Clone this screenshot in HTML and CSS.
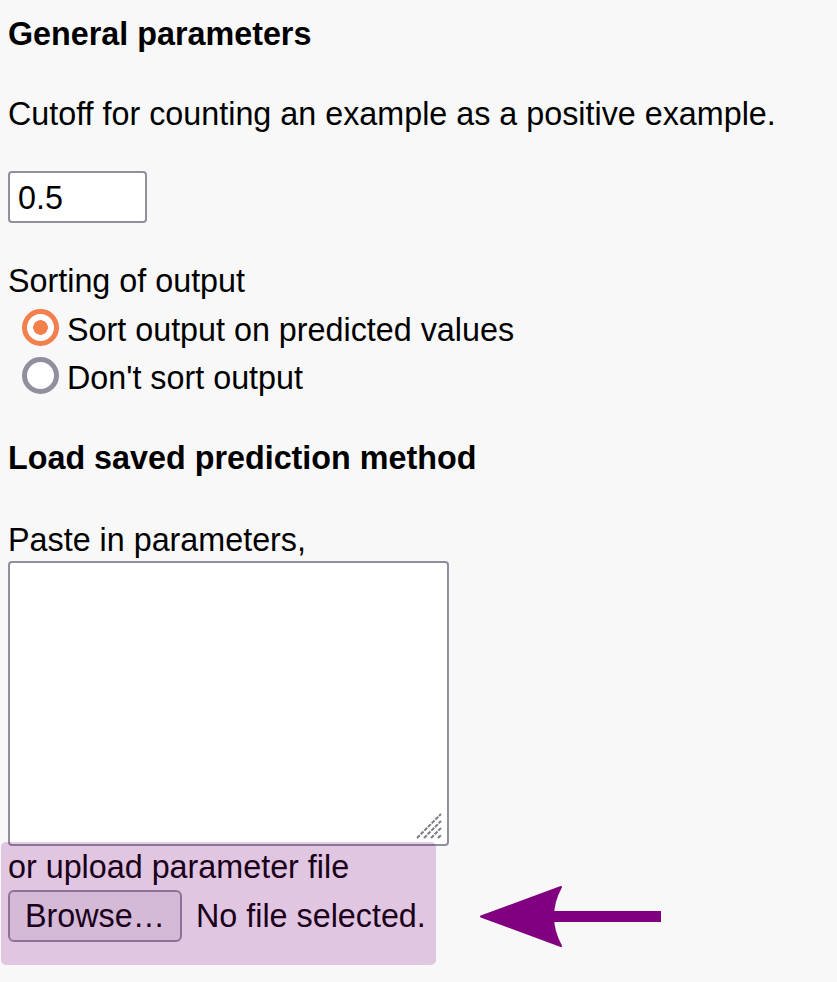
FILE: index.html
```html
<!DOCTYPE html>
<html lang="en">
<head>
<meta charset="utf-8">
<title>Parameters</title>
<link rel="stylesheet" href="styles.css">
</head>
<body>
<main class="form">
  <h2 class="section-title first">General parameters</h2>
  <p class="cutoff-label">Cutoff for counting an example as a positive example.</p>
  <input class="cutoff" type="text" value="0.5">
  <p class="group-label">Sorting of output</p>
  <label class="radio-row first-radio"><input class="radio" type="radio" name="sort" checked><span>Sort output on predicted values</span></label>
  <label class="radio-row"><input class="radio" type="radio" name="sort"><span>Don't sort output</span></label>
  <h2 class="section-title second">Load saved prediction method</h2>
  <p class="paste-label">Paste in parameters,</p>
  <div class="ta-wrap">
    <textarea class="params"></textarea>
    <svg class="grip" width="28" height="28" viewBox="0 0 28 28" aria-hidden="true">
      <path d="M2 26 L26 2 M9 26 L26 9 M16 26 L26 16 M23 26 L26 23" stroke="#7c7c87" stroke-width="2" stroke-dasharray="4 1.2" fill="none"/>
    </svg>
  </div>
  <div class="upload">
    <p class="upload-label">or upload parameter file</p>
    <div class="file-row">
      <button class="browse" type="button">Browse…</button>
      <span class="file-status">No file selected.</span>
    </div>
    <div class="highlight"></div>
  </div>
</main>
<svg class="arrow" width="186" height="66" viewBox="0 0 186 66" aria-hidden="true">
  <rect x="74" y="27" width="109" height="11" fill="#800080"/>
  <path d="M3 32.5 L83 3 Q67 32.5 83 62 Z" fill="#800080" stroke="#800080" stroke-width="2" stroke-linejoin="round"/>
</svg>
</body>
</html>
```

FILE: styles.css
```css
html, body {
  margin: 0;
  padding: 0;
  background: #f8f8f8;
}

body {
  position: relative;
  font-family: "Liberation Sans", Arial, sans-serif;
  font-size: 32.3px;
  line-height: 37px;
  color: #000;
  min-height: 982px;
}

.form {
  padding: 0 8px;
}

.section-title {
  font-size: 32.3px;
  font-weight: bold;
  margin: 0;
  line-height: 37px;
}

.section-title.first {
  margin-top: 16px;
}

.section-title.second {
  margin-top: 38px;
}

p {
  margin: 0;
}

.cutoff-label {
  margin-top: 43px;
}

.cutoff {
  display: block;
  margin: 38px 0 0 0;
  box-sizing: border-box;
  width: 139px;
  height: 52px;
  padding: 3px 8px 0;
  border: 2px solid #8f8f9d;
  border-radius: 4px;
  background: #fff;
  font-family: "Liberation Sans", Arial, sans-serif;
  font-size: 32.3px;
  color: #000;
  outline: none;
}

.group-label {
  margin-top: 40px;
}

.radio-row {
  display: flex;
  align-items: flex-start;
  gap: 8px;
  height: 48px;
  line-height: 48px;
}

.first-radio {
  margin-top: 6px;
}

.radio {
  appearance: none;
  -webkit-appearance: none;
  box-sizing: border-box;
  width: 37px;
  height: 37px;
  margin: 3px 0 0 14px;
  border-radius: 50%;
  border: 5px solid #8f8f9d;
  background: #fff;
  flex: none;
}

.radio:checked {
  border: 5.5px solid #f3804c;
  background: radial-gradient(circle, #f3804c 0 7px, #fff 7.6px);
}

.paste-label {
  margin-top: 45px;
}

.ta-wrap {
  position: relative;
  width: 441px;
  margin-top: 2px;
}

.params {
  display: block;
  box-sizing: border-box;
  width: 441px;
  height: 285px;
  margin: 0;
  border: 2px solid #8f8f9d;
  border-radius: 4px;
  background: #fff;
  resize: none;
  outline: none;
}

.grip {
  position: absolute;
  right: 6px;
  bottom: 6px;
}

.upload {
  position: relative;
  padding-top: 3px;
}

.file-row {
  display: flex;
  align-items: center;
  gap: 14px;
  margin-top: 4px;
}

.browse {
  box-sizing: border-box;
  height: 52px;
  padding: 0 15px;
  border: 2px solid #8f8f9d;
  border-radius: 6px;
  background: #e9e9ed;
  font-family: "Liberation Sans", Arial, sans-serif;
  font-size: 32.3px;
  line-height: 37px;
  color: #000;
}

.highlight {
  position: absolute;
  left: -7px;
  top: -4px;
  width: 435px;
  height: 123px;
  border-radius: 5px;
  background: rgba(128, 0, 128, 0.2);
  pointer-events: none;
}

.arrow {
  position: absolute;
  left: 478px;
  top: 884px;
}
```
